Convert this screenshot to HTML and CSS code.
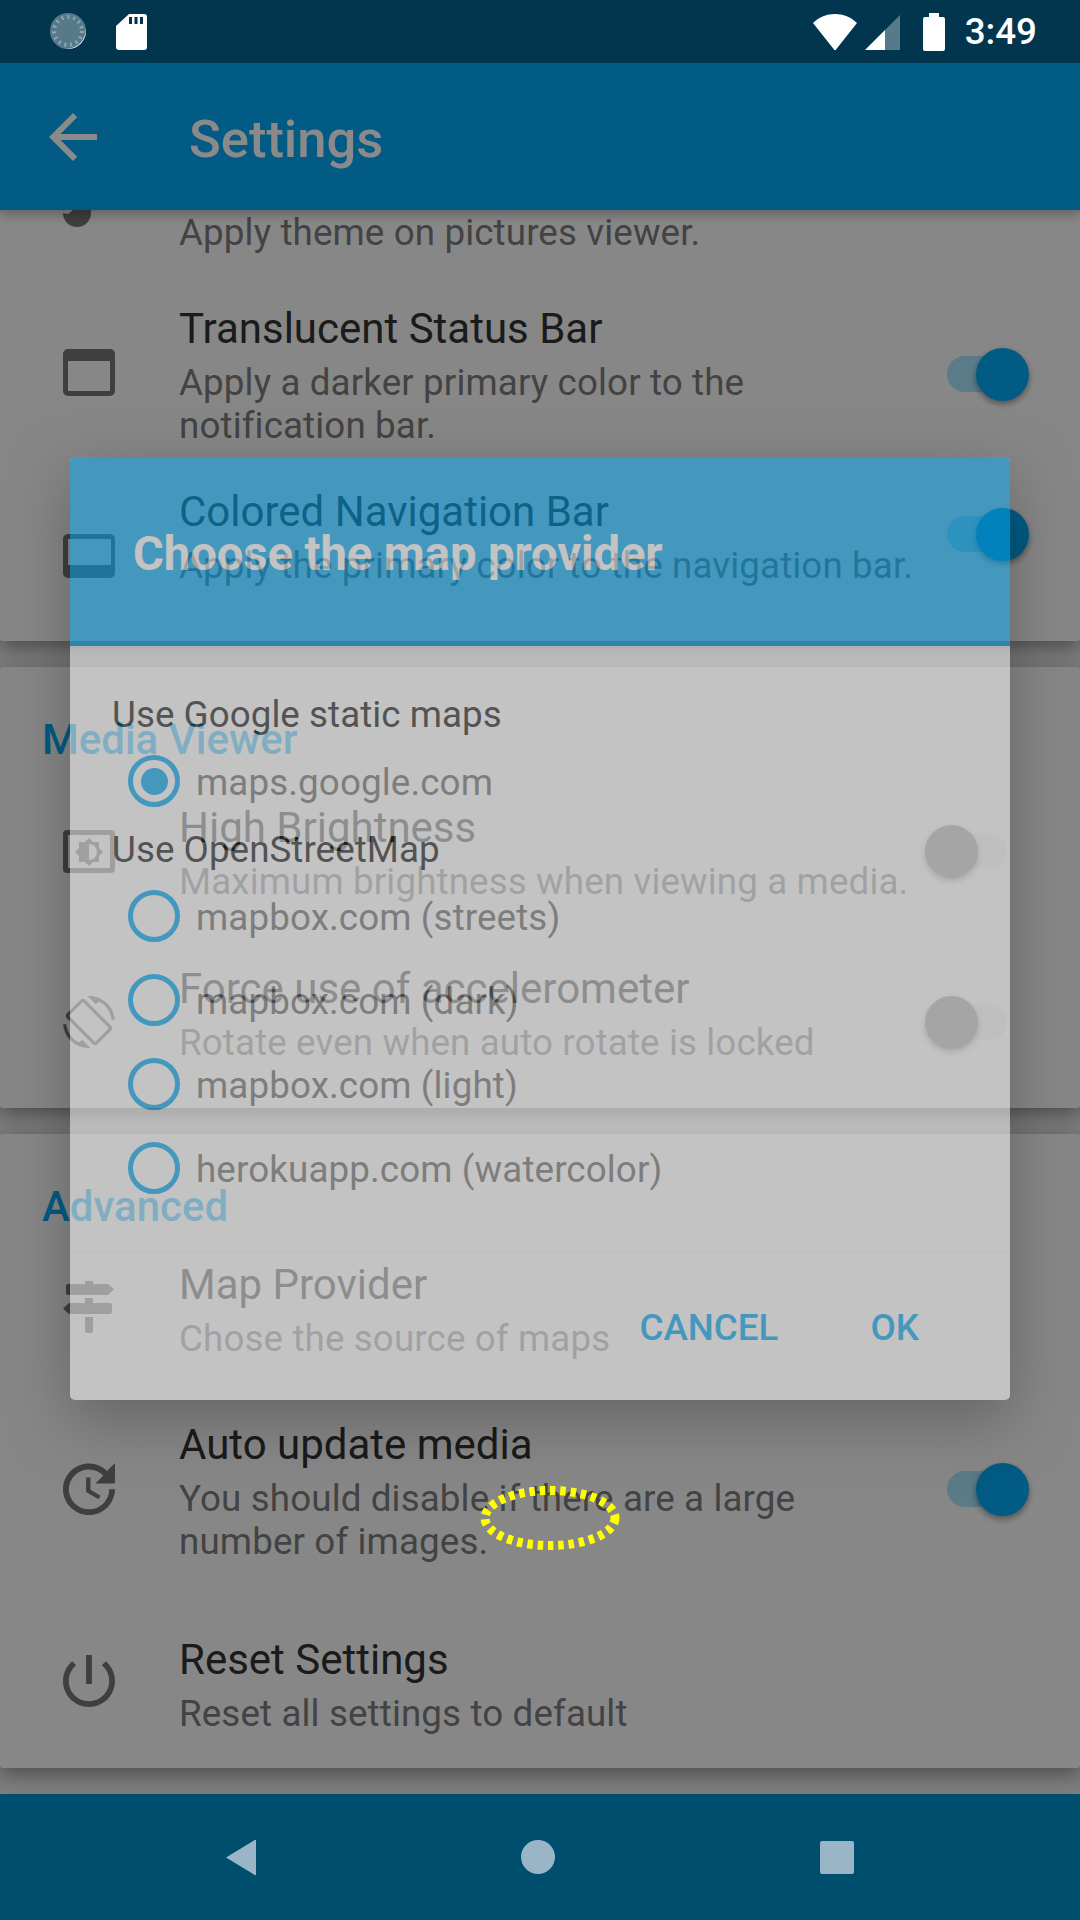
FILE: index.html
```html
<!DOCTYPE html>
<html>
	<head>
		<meta charset="UTF-8">
		<title>Settings</title>
		<link rel="stylesheet" href="styles.css">
	</head>
	<body>
		<div class="phone">
			<!-- status bar -->
			<div class="status">
				<svg class="st-sync" width="37" height="37" viewBox="0 0 37 37">
					<circle cx="18" cy="18" r="18" fill="#577a8b"/>
					<circle cx="18" cy="18" r="14" fill="none" stroke="#8ea6b2" stroke-width="4" stroke-dasharray="2 3.900"/>
					<path d="M35.500 14A18 18 0 0 1 14 35.500 19 19 0 0 0 35.500 14Z" fill="#fff"/>
				</svg>
				<svg class="st-sd" width="31" height="36" viewBox="0 0 31 36">
					<path fill="#fff" d="M13 0H28a3 3 0 0 1 3 3V33a3 3 0 0 1-3 3H3a3 3 0 0 1-3-3V12Z"/>
					<path fill="#02364f" d="M13 3h3v7h-3zM18.500 3h3v7h-3zM24 3h3v7h-3z"/>
				</svg>
				<svg class="st-wifi" width="44" height="36" viewBox="0 0 44 36">
					<path fill="#fff" d="M0 9C6 3 14 0 22 0S38 3 44 9L23 35.500a1 1 0 0 1-2 0Z"/>
				</svg>
				<svg class="st-signal" width="35" height="35" viewBox="0 0 35 35">
					<path fill="#577a8b" d="M20 15 35 0V35H20Z"/>
					<path fill="#fff" d="M0 35 20 15V35Z"/>
				</svg>
				<svg class="st-battery" width="22" height="38" viewBox="0 0 22 38">
					<path fill="#fff" d="M6 0h10v4h4a2 2 0 0 1 2 2V36a2 2 0 0 1-2 2H2a2 2 0 0 1-2-2V6a2 2 0 0 1 2-2h4Z"/>
				</svg>
				<span class="st-time">3:49</span>
			</div>

			<div class="stage">
				<div class="toolbar">
					<svg class="back" width="48" height="48" viewBox="4 4 16 16">
						<path fill="#fff" d="M20 11H7.830l5.590-5.590L12 4l-8 8 8 8 1.410-1.410L7.830 13H20v-2z"/>
					</svg>
					<span class="toolbar-title">Settings</span>
				</div>

				<div class="content">
					<div class="card card-first">
						<div class="row">
							<svg class="icon icon-cut" width="28" height="17" viewBox="0 0 28 17">
								<path d="M0 3 5 4 10 0H28V3A14 14 0 0 1 0 3Z"/>
							</svg>
							<div class="text">
								<div class="sub">Apply theme on pictures viewer.</div>
							</div>
						</div>
						<div class="row row-status">
							<svg class="icon" width="52" height="47" viewBox="0 0 52 47">
								<path fill-rule="evenodd" d="M5 0H47a5 5 0 0 1 5 5V42a5 5 0 0 1-5 5H5a5 5 0 0 1-5-5V5a5 5 0 0 1 5-5ZM5 12V42H47V12Z"/>
							</svg>
							<div class="text">
								<div class="title">Translucent Status Bar</div>
								<div class="sub">Apply a darker primary color to the<br>notification bar.</div>
							</div>
							<div class="switch on"></div>
						</div>
						<div class="row row-nav">
							<svg class="icon icon-nav" width="52" height="44" viewBox="0 0 52 44">
								<path fill-rule="evenodd" d="M5 0H47a5 5 0 0 1 5 5V39a5 5 0 0 1-5 5H5a5 5 0 0 1-5-5V5a5 5 0 0 1 5-5ZM5 5V31H48V5Z"/>
							</svg>
							<div class="text">
								<div class="title">Colored Navigation Bar</div>
								<div class="sub">Apply the primary color to the navigation bar.</div>
							</div>
							<div class="switch on"></div>
						</div>
					</div>

					<div class="card">
						<div class="card-head">Media Viewer</div>
						<div class="row row-bright">
							<svg class="icon" width="52" height="43" viewBox="0 0 52 43">
								<path fill-rule="evenodd" d="M4 0H48a4 4 0 0 1 4 4V39a4 4 0 0 1-4 4H4a4 4 0 0 1-4-4V4a4 4 0 0 1 4-4ZM5 5V38H47V5Z"/>
								<path fill-rule="evenodd" d="M26 8l4 4 6 0 0 6 4 4-4 4 0 6-6 0-4 4-4-4-6 0 0-6-4-4 4-4 0-6 6 0ZM26 14V30A8 8 0 0 0 26 14Z"/>
							</svg>
							<div class="text">
								<div class="title">High Brightness</div>
								<div class="sub">Maximum brightness when viewing a media.</div>
							</div>
							<div class="switch"></div>
						</div>
						<div class="row row-force">
							<svg class="icon" width="52" height="52" viewBox="0 0 24 24">
								<path d="M16.480 2.520c3.270 1.550 5.610 4.720 5.970 8.480h1.500C23.440 4.840 18.290 0 12 0l-.66.03 3.810 3.810 1.330-1.320zm-6.250-.77c-.59-.59-1.540-.59-2.120 0L1.750 8.110c-.59.59-.59 1.540 0 2.120l12.020 12.020c.59.59 1.540.59 2.120 0l6.360-6.360c.59-.59.59-1.540 0-2.120L10.230 1.750zm4.600 19.440L2.810 9.170l6.360-6.360 12.020 12.020-6.360 6.360zm-7.310.29C4.250 19.940 1.910 16.760 1.550 13H.05C.56 19.160 5.710 24 12 24l.66-.03-3.810-3.810-1.330 1.320z"/>
							</svg>
							<div class="text">
								<div class="title">Force use of accelerometer</div>
								<div class="sub">Rotate even when auto rotate is locked</div>
							</div>
							<div class="switch"></div>
						</div>
					</div>

					<div class="card card-last">
						<div class="card-head">Advanced</div>
						<div class="row row-map">
							<svg class="icon" width="52" height="52" viewBox="0 0 52 52">
								<path d="M22 0h8v3h-8zM5 3H45L51 8.500 45 14H5a2 2 0 0 1-2-2V5a2 2 0 0 1 2-2ZM22 17h8v5h-8zM6 22H47a2 2 0 0 1 2 2v7a2 2 0 0 1-2 2H6L0 27.500ZM22 36h8v14a2 2 0 0 1-2 2h-4a2 2 0 0 1-2-2Z"/>
							</svg>
							<div class="text">
								<div class="title">Map Provider</div>
								<div class="sub">Chose the source of maps</div>
							</div>
						</div>
						<div class="row row-auto">
							<svg class="icon" width="52" height="52" viewBox="3 3 18 18">
								<path d="M21 10.120h-6.780l2.740-2.820c-2.730-2.700-7.150-2.800-9.880-.1-2.730 2.710-2.730 7.080 0 9.790 2.730 2.710 7.150 2.710 9.880 0C18.320 15.650 19 14.080 19 12.100h2c0 1.980-.88 4.550-2.640 6.290-3.510 3.480-9.210 3.480-12.720 0-3.500-3.470-3.530-9.110-.02-12.580 3.510-3.470 9.140-3.470 12.650 0L21 3v7.120zM12.500 8v4.250l3.500 2.080-.72 1.210L11 13V8h1.500z"/>
							</svg>
							<div class="text">
								<div class="title">Auto update media</div>
								<div class="sub">You should disable if there are a large<br>number of images.</div>
							</div>
							<div class="switch on"></div>
						</div>
						<div class="row row-reset">
							<svg class="icon" width="52" height="52" viewBox="3 3 18 18">
								<path d="M13 3h-2v10h2V3zm4.830 2.170l-1.420 1.420C17.990 7.860 19 9.810 19 12c0 3.870-3.130 7-7 7s-7-3.130-7-7c0-2.190 1.010-4.140 2.580-5.420L6.170 5.170C4.230 6.820 3 9.260 3 12c0 4.970 4.030 9 9 9s9-4.030 9-9c0-2.740-1.230-5.180-3.170-6.830z"/>
							</svg>
							<div class="text">
								<div class="title">Reset Settings</div>
								<div class="sub">Reset all settings to default</div>
							</div>
						</div>
					</div>
				</div>

				<div class="scrim"></div>

				<!-- dialog sits over the scrim at half opacity -->
				<div class="dialog">
					<div class="dialog-head">Choose the map provider</div>
					<div class="dialog-body">
						<div class="group group-first">Use Google static maps</div>
						<div class="option"><span class="radio checked"></span><span>maps.google.com</span></div>
						<div class="group">Use OpenStreetMap</div>
						<div class="option"><span class="radio"></span><span>mapbox.com (streets)</span></div>
						<div class="option"><span class="radio"></span><span>mapbox.com (dark)</span></div>
						<div class="option"><span class="radio"></span><span>mapbox.com (light)</span></div>
						<div class="option"><span class="radio"></span><span>herokuapp.com (watercolor)</span></div>
					</div>
					<div class="dialog-foot">
						<span class="btn">CANCEL</span>
						<span class="btn">OK</span>
					</div>
				</div>
			</div>

			<!-- nav bar -->
			<div class="navbar">
				<svg width="30" height="35" viewBox="0 0 30 35">
					<path d="M30 1V34a1 1 0 0 1-2 .5L0 17.500 28 .5a1 1 0 0 1 2 .5Z"/>
				</svg>
				<svg width="34" height="34" viewBox="0 0 34 34">
					<circle cx="17" cy="17" r="17"/>
				</svg>
				<svg width="34" height="33" viewBox="0 0 34 33">
					<rect width="34" height="33" rx="2"/>
				</svg>
			</div>

			<!-- yellow touch mark -->
			<svg class="touch" width="146" height="72" viewBox="0 0 146 72">
				<ellipse cx="73" cy="36" rx="65" ry="27.500" fill="none" stroke="#ffff00" stroke-width="9" stroke-dasharray="5.500 4.800"/>
			</svg>
		</div>
	</body>
</html>
```

FILE: styles.css
```css
*{
	margin: 0;
	padding: 0;
	box-sizing: border-box;
}
html,body{
	width: 1080px;
	height: 1920px;
	overflow: hidden;
	font-family: Roboto, "Liberation Sans", sans-serif;
}
.phone{
	width: 1080px;
	height: 1920px;
	display: flex;
	flex-direction: column;
	position: relative;
}

/* status bar */
.status{
	height: 63px;
	flex: none;
	display: flex;
	align-items: center;
	padding: 0 43px 0 50px;
	background-color: #02364f;
}
.st-sd{
	margin-left: 29px;
}
.st-wifi{
	margin-left: auto;
}
.st-signal{
	margin-left: 8px;
	margin-top: 2px;
}
.st-battery{
	margin-left: 23px;
}
.st-time{
	margin-left: 20px;
	color: #fff;
	font-size: 36.75px;
	font-weight: 500;
}

/* toolbar + list + dialog */
.stage{
	flex: 1;
	position: relative;
	overflow: hidden;
	background-color: #e8e8e8;
}
.toolbar{
	height: 147px;
	display: flex;
	align-items: center;
	padding-left: 49px;
	background-color: #03a9f4;
	box-shadow: 0 4px 12px rgba(0,0,0,.3);
	position: relative;
	z-index: 1;
}
.toolbar-title{
	margin-left: 92px;
	padding-top: 5px;
	color: #fff;
	font-size: 52.5px;
	font-weight: 500;
}
.content{
	display: flex;
	flex-direction: column;
	gap: 26px;
}
.card{
	padding-top: 46px;
	padding-bottom: 45px;
	background-color: #fafafa;
	border-radius: 3px;
	box-shadow: 0 6px 20px rgba(0,0,0,.4);
}
.card-first{
	padding-top: 0;
	padding-bottom: 55px;
}
.card-last{
	padding-bottom: 34px;
}
.card-head{
	padding: 1px 0 0 42px;
	margin-bottom: -1px;
	color: #03a9f4;
	font-size: 42px;
	font-weight: 500;
	line-height: 52px;
}
.row{
	display: flex;
	align-items: center;
	padding-left: 63px;
}
.row-status{ margin-top: 49px; }
.row-nav{ margin-top: 39px; }
.row-bright{ margin-top: 36px; }
.row-force{ margin-top: 60px; }
.row-map{ margin-top: 26px; }
.row-auto{ margin-top: 59px; }
.row-reset{ margin-top: 71px; }

.icon{
	flex: none;
	fill: #757575;
}
.icon-cut{
	margin-right: 24px;
	align-self: flex-start;
}
.icon-nav{
	margin-top: 40px;
}
.row-status .icon,
.row-map .icon,
.row-auto .icon{
	margin-top: -3px;
}
.row-reset .icon{
	margin-top: -5px;
}
.row-nav .switch,
.row-auto .switch{
	margin-top: -2px;
}
.row-force .icon,
.row-force .switch{
	margin-top: 19px;
}
.text{
	flex: 1;
	margin-left: 64px;
	padding-top: 1px;
	margin-bottom: -1px;
}
.title{
	color: #333;
	font-size: 42px;
	line-height: 52px;
	margin-bottom: 6px;
}
.sub{
	color: #7c7c7c;
	font-size: 36.75px;
	line-height: 43px;
	letter-spacing: .12px;
}

/* switches */
.switch{
	flex: none;
	width: 104px;
	height: 53px;
	margin-right: 51px;
	position: relative;
}
.switch::before{
	content: "";
	position: absolute;
	left: 0;
	top: 8px;
	width: 82px;
	height: 36px;
	border-radius: 18px;
	background-color: #ebebeb;
}
.switch::after{
	content: "";
	position: absolute;
	left: 0;
	top: 0;
	width: 53px;
	height: 53px;
	border-radius: 50%;
	background-color: #8a8a8a;
	box-shadow: 0 3px 6px rgba(0,0,0,.4);
}
.switch.on::before{
	left: 22px;
	width: 80px;
	background-color: #a9e4fb;
}
.switch.on::after{
	left: 51px;
	background-color: #03a9f4;
}

.scrim{
	position: absolute;
	left: 0;
	top: 0;
	right: 0;
	bottom: 0;
	z-index: 2;
	background-color: rgba(0,0,0,.46);
}

/* dialog */
.dialog{
	position: absolute;
	left: 70px;
	top: 394px;
	width: 940px;
	height: 943px;
	z-index: 3;
	display: flex;
	flex-direction: column;
	opacity: .5;
	background-color: #fff;
	border-radius: 5px;
	box-shadow: 0 20px 60px rgba(0,0,0,.5);
}
.dialog-head{
	height: 189px;
	flex: none;
	padding: 71px 0 0 63px;
	color: #fff;
	font-size: 47.25px;
	font-weight: 700;
	line-height: 53px;
	letter-spacing: -.1px;
	background-color: #03a9f4;
	border-radius: 5px 5px 0 0;
}
.dialog-body{
	flex: 1;
	padding: 47px 0 0 42px;
	font-size: 36.75px;
	line-height: 43px;
}
.group{
	margin: 5px 0 3px;
	color: #212121;
	letter-spacing: .05px;
}
.group-first{
	margin-top: 0;
	margin-bottom: 3px;
}
.option{
	height: 84px;
	display: flex;
	align-items: center;
	gap: 16px;
	padding-left: 16px;
	color: #757575;
	letter-spacing: .12px;
}
.option span:last-child{
	padding-top: 3px;
}
.radio{
	width: 52px;
	height: 52px;
	flex: none;
	border: 5px solid #03a9f4;
	border-radius: 50%;
	display: flex;
	align-items: center;
	justify-content: center;
}
.radio.checked::after{
	content: "";
	width: 27px;
	height: 27px;
	border-radius: 50%;
	background-color: #03a9f4;
}
.dialog-foot{
	height: 148px;
	flex: none;
	display: flex;
	justify-content: flex-end;
	gap: 92px;
	padding: 53px 91px 0 0;
	border-top: 1px solid #f6f6f6;
}
.btn{
	color: #03a9f4;
	font-size: 36.75px;
	font-weight: 500;
	line-height: 43px;
}

/* nav bar */
.navbar{
	height: 126px;
	flex: none;
	display: flex;
	align-items: center;
	justify-content: center;
	gap: 265px;
	background-color: #004e6e;
	fill: #9ab6c6;
}

/* mark drawn over the screen */
.touch{
	position: absolute;
	left: 477px;
	top: 1482px;
	z-index: 4;
}
```
